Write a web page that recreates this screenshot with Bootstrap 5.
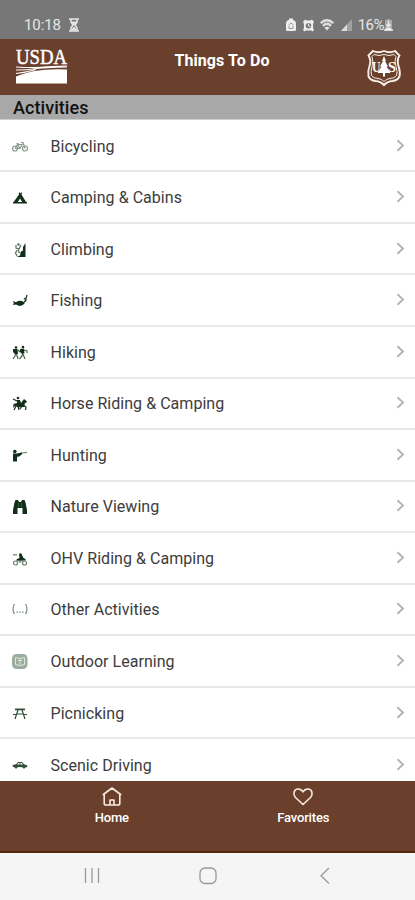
<!DOCTYPE html>
<html lang="en">
<head>
<meta charset="utf-8">
<meta name="viewport" content="width=device-width, initial-scale=1">
<title>Things To Do</title>
<link href="https://cdn.jsdelivr.net/npm/bootstrap@5.3.0/dist/css/bootstrap.min.css" rel="stylesheet">
<style>
body{font-family:Roboto,"Liberation Sans",sans-serif;height:900px;overflow:hidden;background:#fff}
svg{display:block;flex:none}
.status-bar{height:38.5px;background:#777;color:#e6e6e6;font-size:15px;padding:12px 22px 0 24px;line-height:26px}
.status-bar .clock{letter-spacing:-.1px}
.status-bar .icon-gap{margin-left:6.5px}
.status-bar .battery{margin-left:6px;letter-spacing:-.5px}
.app-header{height:56.5px;background:#6a402d;padding:0 13px 0 15px}
.app-title{font-size:16px;font-weight:700;line-height:20px;padding:12px 0 0 29px;letter-spacing:.1px}
.usda{margin-top:4px}
.shield{margin-top:10px}
.section-title{height:25px;background:#a8a8a8;border-bottom:1px solid #ccc;color:#111;font-size:18px;font-weight:500;line-height:26px;padding-left:13px;letter-spacing:.06px}
.activity-list{height:661px;overflow:hidden;padding-top:.8px}
.activity-list .list-group-item{height:51.55px;border-color:#e8e8e8;border-width:0 0 2px;color:#3c3c3c;font-size:16px;padding:2px 9px 0 12px;letter-spacing:.04px}
.activity-list svg.pic{width:16px;height:16px;margin-right:22.5px;fill:#10301a;stroke:#10301a;stroke-width:0}
.activity-list svg.pic .ln{fill:none;stroke-width:1.2}
.activity-list svg.chev{margin-top:-2px}
.tab-bar{height:71.5px;background:#6a402d;border-bottom:2px solid #55260a;padding:5px 16px 0}
.tab-bar a{color:#fff;font-size:13px;font-weight:500;line-height:17px;letter-spacing:-.18px}
.tab-bar svg{margin-bottom:2px}
.system-nav{height:48px;background:#f5f5f5}
</style>
<script src="https://cdn.jsdelivr.net/npm/bootstrap@5.3.0/dist/js/bootstrap.bundle.min.js"></script>
</head>
<body class="d-flex flex-column">
<div class="status-bar d-flex align-items-center flex-shrink-0">
  <span class="clock">10:18</span>
  <svg class="ms-2" width="10" height="14" viewBox="0 0 10 14" fill="none" stroke="#e6e6e6" stroke-width="1.600"><path d="M0 1h10M0 13h10M2 1v3l2 3-2 3v3M8 1v3L6 7l2 3v3"/><path d="M3 12l2-3 2 3zM3 4h4L5 7z" fill="#e6e6e6" stroke-width="1"/></svg>
  <svg class="ms-auto" width="10" height="14" viewBox="0 0 10 14"><path d="M3 2V.5h4V2q3 .5 3 4v5.500q0 1.500-1.500 1.500h-7Q0 13 0 11.500V6q0-3.500 3-4z" fill="#eee"/><path d="M2.500 7L5 5l2.500 2M3 8v2.500h4V8" fill="none" stroke="#999"/></svg>
  <svg class="icon-gap" width="11" height="13" viewBox="0 0 12 13"><path d="M0 2.500L2.500 0l1.500 1h4l1.500-1L12 2.500 11 4.500v5l1 2-1.500 1.500-1.500-1H3l-1.500 1L0 11.500l1-2v-5z" fill="#eee"/><circle cx="6" cy="6.700" r="3" fill="#777"/><path d="M6 4.500V7l2 .7" fill="none" stroke="#fff"/></svg>
  <svg class="icon-gap" width="14" height="12" viewBox="0 0 14 12" fill="none" stroke="#dedede" stroke-width="2.500"><path d="M.7 4.200Q7-1.600 13.300 4.200M3 6.800q4-3.800 8 0"/><path d="M7 11.500L4.500 8.700q2.500-1.700 5 0z" fill="#e4e4e4" stroke="none"/></svg>
  <svg class="icon-gap" width="11" height="12" viewBox="0 0 11 12"><path d="M11 0v12H0z" fill="#a0a0a0"/><path d="M6 5.500V12H0z" fill="#ddd"/></svg>
  <span class="battery">16%</span>
  <svg width="9" height="12" viewBox="0 0 9 12"><path d="M3 1V0h3v1h2v11H1V1z" fill="#aaa"/><path d="M4.500 2v5M2.500 5.500l2 2 2-2M0 11h9M2 9.500h5" fill="none" stroke="#eee" stroke-width="1.400"/></svg>
</div>
<header class="app-header d-flex justify-content-between align-items-start text-white flex-shrink-0 position-relative">
  <svg class="usda" width="54" height="42" viewBox="0 -4 54 42" fill="#fff"><text x="1" y="17" font-family="Liberation Serif,serif" font-size="21" textLength="51" lengthAdjust="spacingAndGlyphs" stroke="#fff" stroke-width=".5">USDA</text><path d="M1 29.500Q20 21 52 22.500V36.500H1z"/><path d="M1 20q14 1 25 .2T52 19M1 23q10 .2 18-1.200T52 20M1 26.500q10-1 20-4" fill="none" stroke="#fff" stroke-width="1.100"/></svg>
  <div class="app-title position-absolute start-0 end-0 text-center">Things To Do</div>
  <svg class="shield" width="36" height="38" viewBox="0 0 36 38" fill="none" stroke="#f8eee8"><path d="M7 2Q12.500 4.500 18 2q5.500 2.500 11 0l4.500 4.500Q30.500 11 32.500 17t1 10.500q-2 4-7 4.500-5 .3-8.500 4-3.500-3.700-8.500-4-5-.5-7-4.500-1-5 1-10.500T2.500 6.500z" stroke-width="1.900"/><path d="M8 5.500q5 2 10 0 5 2 10 0l2 2Q28 12 30 17.500t.5 9q-2 3-6.500 3-4 .5-6 3-2-2.500-6-3-4.500 0-6.500-3-1-4 .5-9T6 7.500z" stroke-width="1"/><path d="M18 7l2 5h-1l3 5.500h-1.500l4 6.500H19v3.500h-2V24h-5.500l4-6.500H14l3-5.500h-1z" fill="#fff" stroke="none"/><g fill="#fff" stroke="none" font-family="Liberation Serif,serif" font-weight="700" font-size="15"><text x="6" y="23" textLength="8.500" lengthAdjust="spacingAndGlyphs">U</text><text x="22" y="23" textLength="8" lengthAdjust="spacingAndGlyphs">S</text></g></svg>
</header>
<h1 class="section-title m-0 flex-shrink-0">Activities</h1>
<ul class="activity-list list-group list-group-flush flex-shrink-0">
  <li class="list-group-item d-flex align-items-center flex-shrink-0"><svg class="pic" viewBox="0 0 16 16" opacity=".5"><g class="ln"><circle cx="3" cy="9.500" r="2.500"/><circle cx="13" cy="9.500" r="2.500"/><path d="M3 9.500l2.500-4h4.500L8 9.500H3M5.500 5.500L8 9.500M9 3.500h2l2 6M4.500 4.500h2"/></g></svg>Bicycling</li>
  <li class="list-group-item d-flex align-items-center flex-shrink-0"><svg class="pic" viewBox="0 0 16 16"><path d="M6.800 2.500h1l.5 1 .8-1h1.200L9.500 4.500 14 12h1v1.500H1V12h.7L7 4.500zM8 8.500L5.800 12h4.400z" fill-rule="evenodd"/></svg>Camping &amp; Cabins</li>
  <li class="list-group-item d-flex align-items-center flex-shrink-0"><svg class="pic" viewBox="0 0 16 16"><path d="M13.500 1v14H4.500L8 13.500l1-4 2-1V5z"/><g opacity=".7"><circle cx="6.500" cy="2.500" r="1.200"/><path class="ln" d="M4 3v3l3 1 2-4M6.500 6v4l2 1M5 8l-1.500 3 1.500 3"/></g></svg>Climbing</li>
  <li class="list-group-item d-flex align-items-center flex-shrink-0"><svg class="pic" viewBox="0 0 16 16"><path d="M1 8l3 1.200Q9 6 13 10q-4 5-9 1.500L1 12l.8-2z"/><path class="ln" d="M12 9q2.500-1 2-4l1-3M13 5l-1 1.500"/></svg>Fishing</li>
  <li class="list-group-item d-flex align-items-center flex-shrink-0"><svg class="pic" viewBox="0 0 16 16"><circle cx="4" cy="2.500" r="1.300"/><circle cx="11" cy="2" r="1.300"/><path d="M1 4h4.500l.5 5H3L1 7zM8 4l4-.5.5 5h-3L8 7z"/><path class="ln" opacity=".75" d="M4 7l-1 4-2 3M4.500 9l1.500 5M11 7l-1 4-2.500 3M11 9l2 5M12 5l3 1v2M6 5l2 2"/></svg>Hiking</li>
  <li class="list-group-item d-flex align-items-center flex-shrink-0"><svg class="pic" viewBox="0 0 16 16"><circle cx="6" cy="2" r="1.300"/><path d="M5 4h3l1 3 3-4 3 2.500-.5 1L13 7l-1 4-6 .2-3-1.500L1 12l.5-4L5 7z"/><path class="ln" d="M4 10l-2 4M6 10l1 4M11 9l3 2-.5 3M10 10l-2 3M1 3l4 2"/></svg>Horse Riding &amp; Camping</li>
  <li class="list-group-item d-flex align-items-center flex-shrink-0"><svg class="pic" viewBox="0 0 16 16"><circle cx="2.800" cy="3.500" r="1.800"/><path d="M1 5.500h4l5-1v1.800L7 8.500 5 8v5.500H1z"/><path class="ln" d="M5 7l5-2 5-.7M5 9l3-2" opacity=".6"/></svg>Hunting</li>
  <li class="list-group-item d-flex align-items-center flex-shrink-0"><svg class="pic" viewBox="0 0 16 16"><path d="M3.500 1H6l1 2h2l1-2h2.500l1 2.500L15 11v4h-4.500V9h-5v6H1v-4l1.500-7.500z"/><path d="M6.500 4v4M9.500 4v4" fill="none" stroke="#59785a" stroke-width=".6"/></svg>Nature Viewing</li>
  <li class="list-group-item d-flex align-items-center flex-shrink-0"><svg class="pic" viewBox="0 0 16 16"><path d="M7 3l2-1 1 2 1.500 3 2 1v1.500H4L5 8l2.500-1z"/><path d="M1 3h4v1.500H1z" opacity=".5"/><g class="ln" opacity=".6"><circle cx="3.500" cy="12" r="2"/><circle cx="12.500" cy="12" r="2"/><path d="M5 10h6M8 8v4"/></g></svg>OHV Riding &amp; Camping</li>
  <li class="list-group-item d-flex align-items-center flex-shrink-0"><svg class="pic" viewBox="0 0 16 16" opacity=".55"><path class="ln" d="M2.500 2Q-.5 7 2.500 12M13.500 2q3 5 0 10"/><path d="M4.500 9.500H6v1.200H4.500zM7.300 9.500h1.500v1.200H7.300zM10 9.500h1.500v1.200H10z"/></svg>Other Activities</li>
  <li class="list-group-item d-flex align-items-center flex-shrink-0"><svg class="pic" viewBox="0 0 16 16"><rect width="15.500" height="15" rx="4.500" fill="#9bad9f"/><path d="M3.500 3.500l4.500 1 4.500-1v7l-4.500 1-4.500-1zM8 5.500v5M6 6.500h4" fill="none" stroke="#dfe8e0" stroke-width="1"/></svg>Outdoor Learning</li>
  <li class="list-group-item d-flex align-items-center flex-shrink-0"><svg class="pic" viewBox="0 0 16 16" opacity=".85"><path d="M3 2.500h10v1.800H3z"/><path class="ln" d="M1 8.500h4M11 8.500h4M6 4L3 13M10 4l3 9M5 8h6"/></svg>Picnicking</li>
  <li class="list-group-item d-flex align-items-center flex-shrink-0"><svg class="pic" viewBox="0 0 16 16" opacity=".85"><path d="M.5 7l3.500-.7L6 4h4L12.500 6.500l2.700.7v2L1 9zM6.200 5L5 6.500h2.500V5zM8.300 5v1.500H11L9.700 5z" fill-rule="evenodd"/><circle cx="4" cy="9.300" r="1.300"/><circle cx="12" cy="9.300" r="1.300"/></svg>Scenic Driving</li>
</ul>
<nav class="tab-bar d-flex flex-shrink-0">
  <a href="#" class="col-6 d-flex flex-column align-items-center text-decoration-none"><svg width="22" height="21" viewBox="0 0 22 21" fill="none" stroke="#fae9df" stroke-width="1.600" stroke-linejoin="round" stroke-linecap="round"><path d="M2.300 8.500L11 2l8.700 6.500M3.200 8v9.200q0 1.800 1.800 1.800h12q1.800 0 1.800-1.800V8M9 19v-5h4v5"/></svg>Home</a>
  <a href="#" class="col-6 d-flex flex-column align-items-center text-decoration-none"><svg width="22" height="21" viewBox="0 0 22 21" fill="none" stroke="#fae9df" stroke-width="1.600" stroke-linejoin="round"><path d="M11 18.500L3.500 11.500C.5 8 2 3 6 3q3.500 0 5 3 1.500-3 5-3c4 0 5.500 5 2.500 8.500z"/></svg>Favorites</a>
</nav>
<div class="system-nav d-flex justify-content-center align-items-center flex-grow-1">
  <svg width="250" height="20" viewBox="0 0 250 20" fill="none" stroke="#999" stroke-width="1.300"><path d="M2.500 2v15M9 2v15M15.500 2v15"/><rect x="117" y="2" width="16" height="15.500" rx="5"/><path d="M246 2l-8 7.700 8 7.800"/></svg>
</div>
<script>
  const arrow = '<svg class="chev ms-auto" width="11" height="16" viewBox="0 0 11 16" fill="none" stroke="#b4b4b4" stroke-width="1.900"><path d="M2.500 2.300l5.500 5.200-5.500 5.200"/></svg>';
  document.querySelectorAll('.activity-list li').forEach(li => li.insertAdjacentHTML('beforeend', arrow));
</script>
</body>
</html>
